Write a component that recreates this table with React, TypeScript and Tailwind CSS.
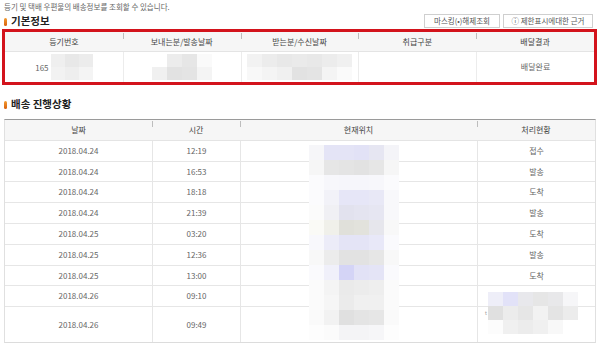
const lavA = "#e4e4f6";

// pixelated (mosaic) blocks that hide personal data
const locationMosaic: string[][] = [
  ["#f6f6f9", lavA, lavA, "#e2e2f6", "#e6e6f2", "#f4f4f8"],
  ["#f6f6f6", "#e6e6e6", "#e4e4e4", "#e2e2e2", "#e6e6e6", "#f6f6f6"],
  ["#fbfbfd", "#f7f7fb", "#f6f6fb", "#f6f6fb", "#f7f7fb", "#fbfbfd"],
  ["#fbfbfd", "#f2f2f8", "#e6e6f7", "#e6e6f7", "#e8e8f6", "#f8f8fb"],
  ["#fbfbfb", "#f0f0f4", "#e2e2ee", "#e4e4f0", "#e6e6f2", "#f8f8fb"],
  ["#fafaf6", "#f0f0ea", "#e0e0da", "#e2e2dc", "#e6e6ec", "#f8f8f8"],
  ["#f8f8fc", "#ececf8", "#e4e4f6", "#e4e4f6", "#e8e8f8", "#fafafd"],
  ["#f8f8f8", "#ececec", "#e2e2e2", "#e2e2e2", "#e6e6e6", "#f8f8f8"],
  ["#fafafd", "#f0f0fa", "#d4d4f6", "#e2e2f6", "#e4e4f6", "#fafafd"],
  ["#fbfbfb", "#f4f4f4", "#eaeaea", "#ececec", "#eeeeee", "#fbfbfb"],
  ["#fbfbfb", "#f6f6f6", "#ebebeb", "#f0f0f0", "#f0f0f0", "#fbfbfb"],
  ["#fafafa", "#f2f2f2", "#e0e0e0", "#e4e4e4", "#e6e6e6", "#fafafa"],
  ["#fdfdfd", "#fbfbfb", "#f4f4f6", "#f4f4f6", "#f6f6f8", "#fdfdfd"],
];

const statusMosaic: string[][] = [
  ["#eeeef8", "#e2e2f8", "#e8e8ec", "#e6e6e6", "#e8e8ea", "#f6f6f8"],
  ["#e0e0e0", "#ececec", "#e6e6e6", "#f2f2f2", "#e4e4e4", "#ececec"],
  ["#fcfcfc", "#f0f0f0", "#ececec", "#f0f0f0", "#f8f8f8", "#ffffff"],
];

const numMosaic = [
  ["#efefef", "#e8e8e8", "#ececec"],
  ["#f2f2f2", "#eeeeee", "#f4f4f4"],
];
const senderMosaic = [
  ["#ffffff", "#ececec", "#e6e6e6", "#fafafa"],
  ["#f0f0f0", "#e2e2e2", "#e4e4e4", "#f4f4f4"],
];
const receiverMosaic = [
  ["#f2f2f2", "#ececec", "#e8e8e8", "#eaeaea", "#e8e8e8", "#ececec", "#f0f0f0"],
  ["#f8f8f8", "#f4f4f4", "#f0f0f0", "#e2e2e2", "#e4e4e4", "#f4f4f4", "#fafafa"],
];

function Mosaic({ cells, w, h }: { cells: string[][]; w: number; h: number }) {
  return (
    <div className="flex flex-col">
      {cells.map((row, r) => (
        <div key={r} className="flex">
          {row.map((c, i) => (
            <div key={i} style={{ width: w, height: h, background: c }} />
          ))}
        </div>
      ))}
    </div>
  );
}

function SectionTitle({ children }: { children: React.ReactNode }) {
  return (
    <div className="flex items-end gap-[4px]">
      <span className="mb-[2px] h-[8px] w-[3px] rounded-full bg-gradient-to-b from-[#f29a2e] to-[#d8600c]" />
      <span className="text-[10.5px] font-bold leading-[14px] text-[#222]">{children}</span>
    </div>
  );
}

const progress = [
  { date: "2018.04.24", time: "12:19", status: "접수", h: "h-[21px]" },
  { date: "2018.04.24", time: "16:53", status: "발송", h: "h-[20px]" },
  { date: "2018.04.24", time: "18:18", status: "도착", h: "h-[21px]" },
  { date: "2018.04.24", time: "21:39", status: "발송", h: "h-[21px]" },
  { date: "2018.04.25", time: "03:20", status: "도착", h: "h-[21px]" },
  { date: "2018.04.25", time: "12:36", status: "발송", h: "h-[21px]" },
  { date: "2018.04.25", time: "13:00", status: "도착", h: "h-[20px]" },
  { date: "2018.04.26", time: "09:10", status: "", h: "h-[21px]" },
  { date: "2018.04.26", time: "09:49", status: "", h: "h-[35px]" },
];

const tick = "absolute left-0 top-[1px] h-[6px] w-px bg-[#bdbdbd]";

export default function App() {
  return (
    <div className="h-[348px] w-[600px] overflow-hidden bg-white font-['Noto_Sans_CJK_KR','Noto_Sans',sans-serif] text-[8px] text-[#666]">
      {/* intro line */}
      <p className="h-[13px] pl-[4px] text-[7.5px] leading-[13px] text-[#666]">
        등기 및 택배 우편물의 배송정보를 조회할 수 있습니다.
      </p>

      {/* 기본정보 */}
      <div className="flex h-[16px] items-center justify-between pl-[4px] pr-[7px]">
        <SectionTitle>기본정보</SectionTitle>
        <div className="flex gap-[3px]">
          <button className="flex h-[14px] w-[76px] items-center justify-center border border-[#cfcfcf] bg-white text-[7.5px] text-[#555]">
            마스킹(•)해제조회
          </button>
          <button className="flex h-[14px] w-[90px] items-center justify-center border border-[#cfcfcf] bg-white text-[7.5px] text-[#555]">
            ⓘ 제한표시에대한 근거
          </button>
        </div>
      </div>

      <div className="ml-[2px] h-[56px] w-[595px] border-[3px] border-[#d3131c]">
        <div className="grid h-[20px] grid-cols-5 border-b border-[#e4e4e4] bg-[#f6f6f6] text-[#444]">
          {["등기번호", "보내는분/발송날짜", "받는분/수신날짜", "취급구분", "배달결과"].map((t, i) => (
            <div key={t} className="relative flex items-center justify-center">
              {i > 0 && <span className={tick} />}
              {t}
            </div>
          ))}
        </div>
        <div className="grid h-[30px] grid-cols-5">
          <div className="flex items-center justify-center gap-[2px]">
            <span className="pt-[1px]">165</span>
            <Mosaic cells={numMosaic} w={14} h={13} />
          </div>
          <div className="flex items-center justify-center border-l border-[#ececec]">
            <Mosaic cells={senderMosaic} w={15} h={13} />
          </div>
          <div className="flex items-center justify-center border-l border-[#ececec]">
            <Mosaic cells={receiverMosaic} w={15} h={13} />
          </div>
          <div className="border-l border-[#ececec]" />
          <div className="flex items-center justify-center border-l border-[#ececec]">배달완료</div>
        </div>
      </div>

      {/* 배송 진행상황 */}
      <div className="mt-[11px] flex h-[16px] items-center pl-[4px]">
        <SectionTitle>배송 진행상황</SectionTitle>
      </div>

      <div className="relative ml-[4px] mt-[7px] w-[592px] border-x border-b border-t border-x-[#e0e0e0] border-b-[#dcdcdc] border-t-[#9a9a9a]">
        <div className="grid h-[21px] grid-cols-[147px_88px_237px_118px] border-b border-[#e4e4e4] bg-[#f6f6f6] text-[#444]">
          {["날짜", "시간", "현재위치", "처리현황"].map((t, i) => (
            <div key={t} className="relative flex items-center justify-center">
              {i > 0 && <span className={tick} />}
              {t}
            </div>
          ))}
        </div>
        {progress.map((p, i) => (
          <div
            key={i}
            className={`grid grid-cols-[147px_88px_237px_118px] ${p.h} ${i < progress.length - 1 ? "border-b border-[#e6e6e6]" : ""}`}
          >
            <div className="flex items-center justify-center">{p.date}</div>
            <div className="flex items-center justify-center border-l border-[#e6e6e6]">{p.time}</div>
            <div className="border-l border-[#e6e6e6]" />
            <div className="flex items-center justify-center border-l border-[#e6e6e6]">{p.status}</div>
          </div>
        ))}

        {/* masked location / last status */}
        <div className="absolute left-[304px] top-[25px]">
          <Mosaic cells={locationMosaic} w={15} h={15} />
        </div>
        <div className="absolute left-[480px] top-[172px] flex items-center">
          <span className="mr-[1px] text-[5px] text-[#999]">t</span>
          <Mosaic cells={statusMosaic} w={15} h={14} />
        </div>
      </div>
    </div>
  );
}
